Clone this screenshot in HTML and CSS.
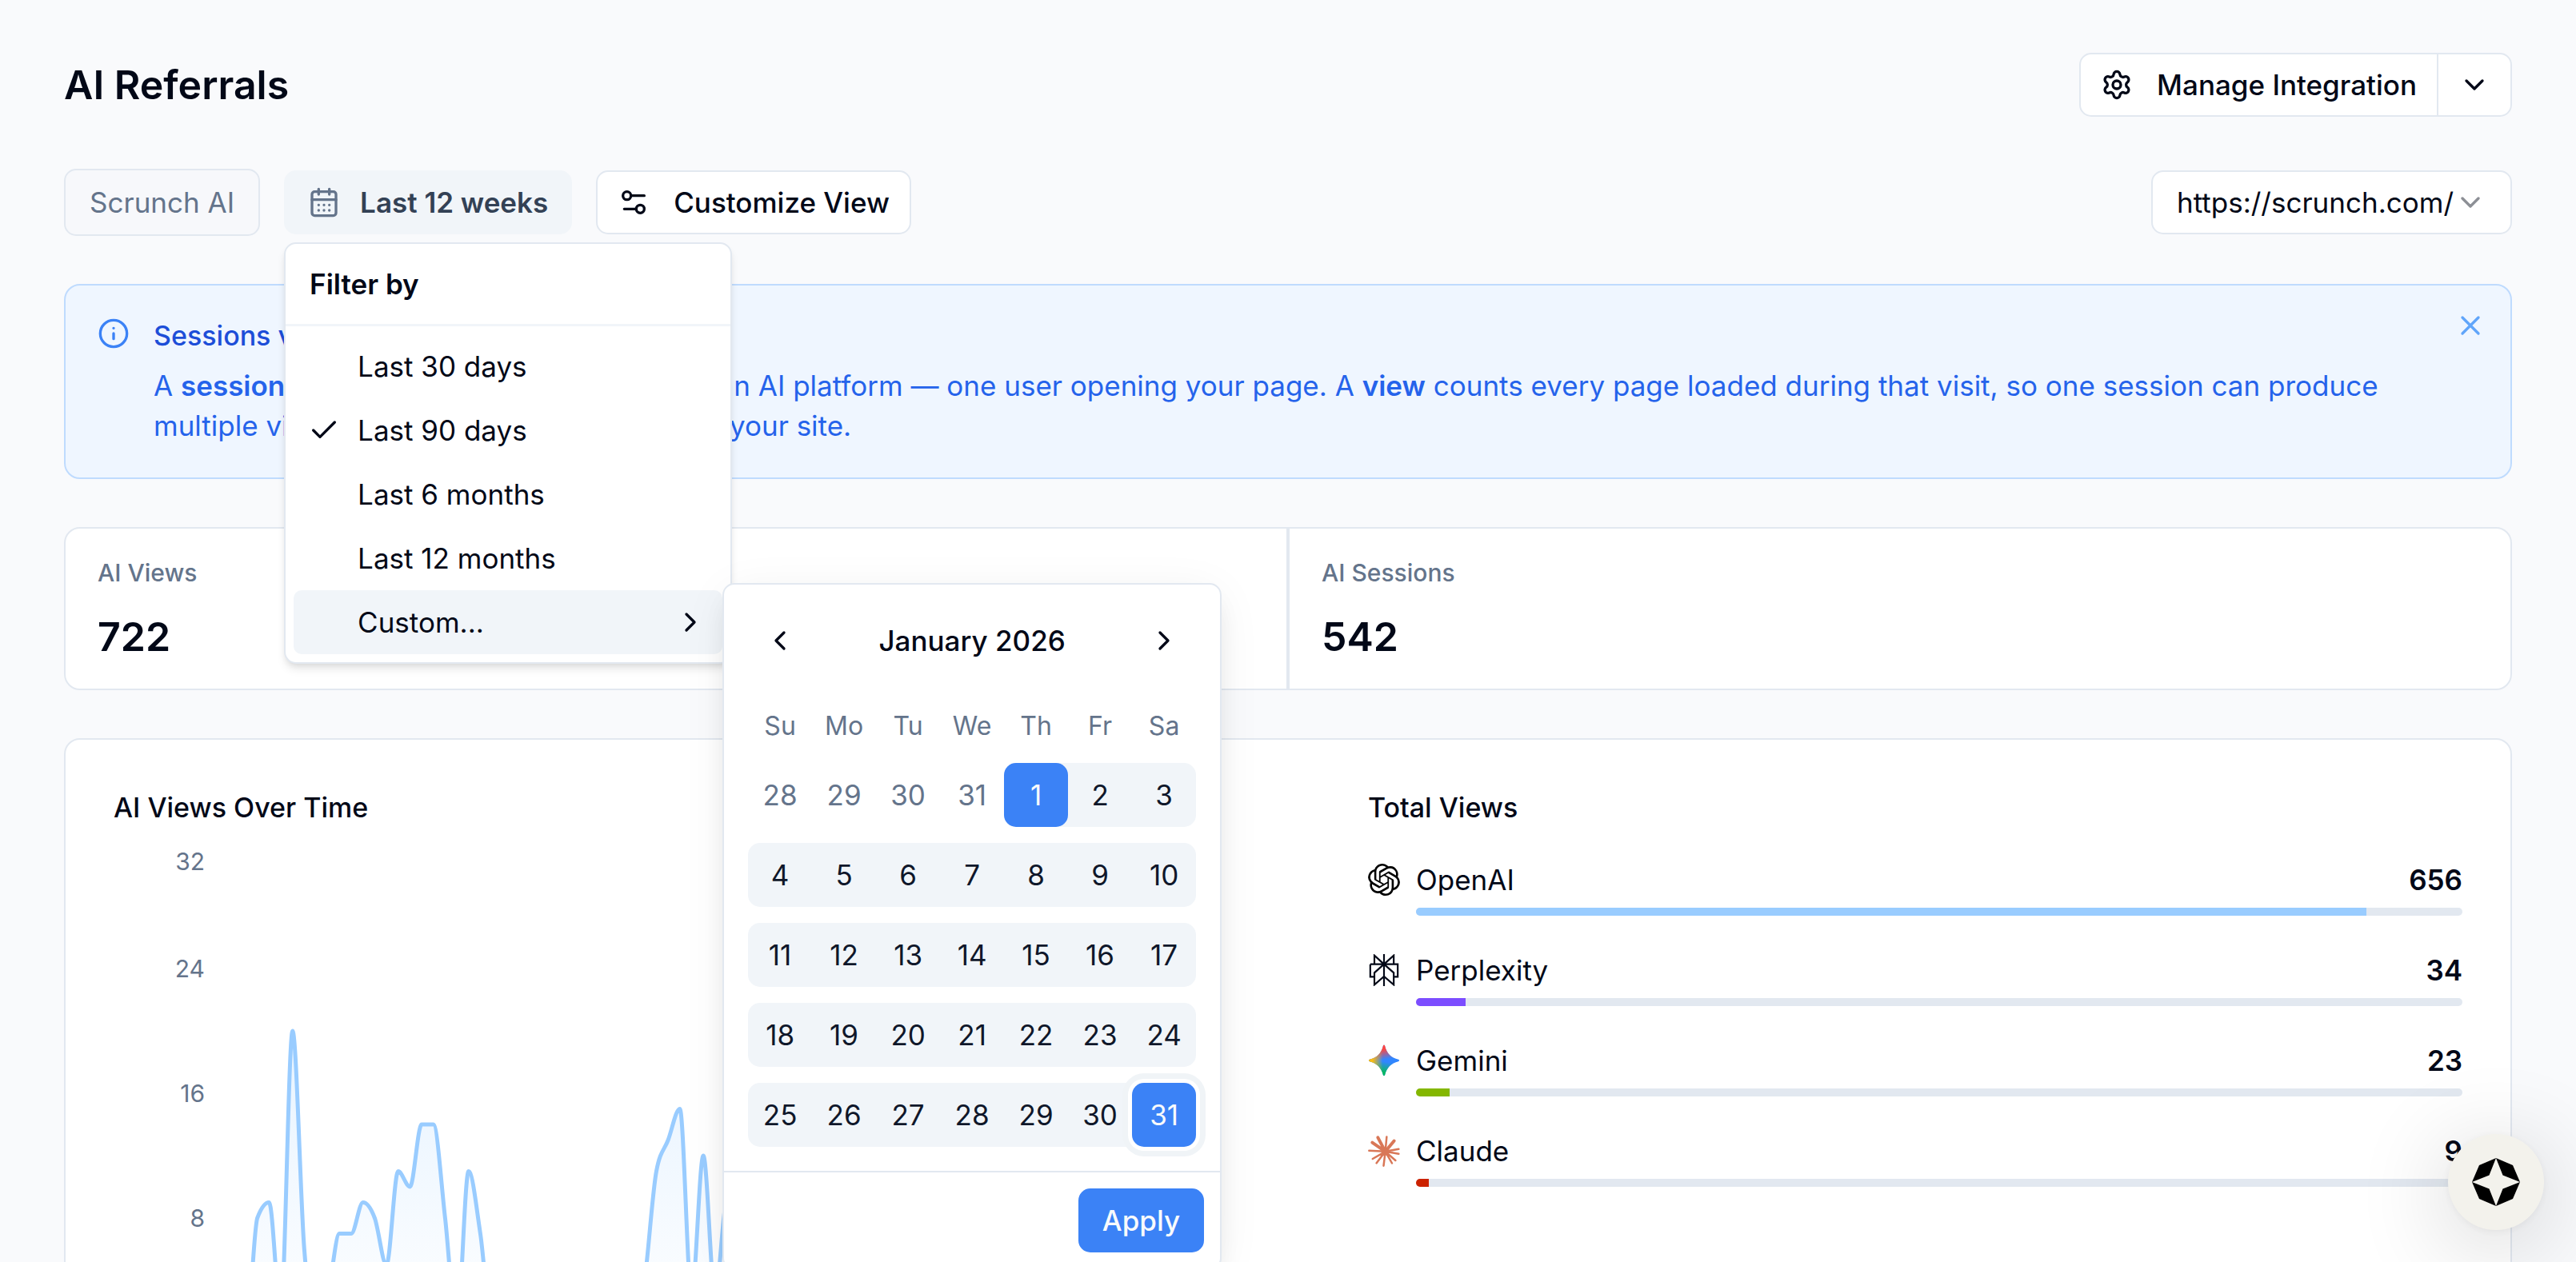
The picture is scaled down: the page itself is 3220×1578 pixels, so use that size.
FILE: index.html
```html
<!DOCTYPE html>
<html lang="en">
<head>
    <meta charset="UTF-8">
    <meta name="viewport" content="width=device-width, initial-scale=1.0">
    <title>AI Referrals</title>
    <link rel="stylesheet" href="styles.css">
</head>
<body>
    <main class="page">
        <header class="page-header">
            <h1>AI Referrals</h1>
            <div class="split-button">
                <button type="button" class="btn split-main">
                    <svg class="icon" viewBox="0 0 24 24"><path d="M9.671 4.136a2.34 2.34 0 0 1 4.659 0 2.34 2.34 0 0 0 3.319 1.915 2.34 2.34 0 0 1 2.33 4.033 2.34 2.34 0 0 0 0 3.831 2.34 2.34 0 0 1-2.33 4.033 2.34 2.34 0 0 0-3.319 1.915 2.34 2.34 0 0 1-4.659 0 2.34 2.34 0 0 0-3.32-1.915 2.34 2.34 0 0 1-2.33-4.033 2.34 2.34 0 0 0 0-3.831A2.34 2.34 0 0 1 6.35 6.051a2.34 2.34 0 0 0 3.319-1.915"/><circle cx="12" cy="12" r="3"/></svg>
                    Manage Integration
                </button>
                <button type="button" class="btn split-more" aria-label="More options">
                    <svg class="icon" viewBox="0 0 24 24"><path d="m6 9 6 6 6-6"/></svg>
                </button>
            </div>
        </header>

        <div class="toolbar">
            <button type="button" class="btn brand" disabled>Scrunch AI</button>
            <div class="filter">
                <button type="button" class="btn btn-filter" aria-expanded="true">
                    <svg class="icon" viewBox="0 0 24 24"><path d="M8 2v4M16 2v4M3 10h18M8 14h.01M12 14h.01M16 14h.01M8 18h.01M12 18h.01M16 18h.01"/><rect x="3" y="4" width="18" height="18" rx="2"/></svg>
                    Last 12 weeks
                </button>

                <div class="menu" role="menu">
                    <div class="menu-label">Filter by</div>
                    <hr class="menu-separator">
                    <button type="button" class="menu-item" role="menuitem">Last 30 days</button>
                    <button type="button" class="menu-item checked" role="menuitem">
                        <svg class="icon" viewBox="0 0 24 24"><path d="M20 6 9 17l-5-5"/></svg>
                        Last 90 days
                    </button>
                    <button type="button" class="menu-item" role="menuitem">Last 6 months</button>
                    <button type="button" class="menu-item" role="menuitem">Last 12 months</button>
                    <button type="button" class="menu-item active" role="menuitem">
                        Custom...
                        <svg class="icon" viewBox="0 0 24 24"><path d="m9 18 6-6-6-6"/></svg>
                    </button>
                </div>

                <div class="calendar">
                    <div class="calendar-body">
                        <div class="calendar-nav">
                            <button type="button" aria-label="Previous month"><svg class="icon" viewBox="0 0 24 24"><path d="m15 18-6-6 6-6"/></svg></button>
                            <span>January 2026</span>
                            <button type="button" aria-label="Next month"><svg class="icon" viewBox="0 0 24 24"><path d="m9 18 6-6-6-6"/></svg></button>
                        </div>
                        <table class="calendar-grid">
                            <thead>
                                <tr><th>Su</th><th>Mo</th><th>Tu</th><th>We</th><th>Th</th><th>Fr</th><th>Sa</th></tr>
                            </thead>
                            <tbody>
                                <tr>
                                    <td class="outside"><button type="button">28</button></td>
                                    <td class="outside"><button type="button">29</button></td>
                                    <td class="outside"><button type="button">30</button></td>
                                    <td class="outside"><button type="button">31</button></td>
                                    <td class="range-start"><button type="button">1</button></td>
                                    <td><button type="button">2</button></td>
                                    <td><button type="button">3</button></td>
                                </tr>
                                <tr>
                                    <td><button type="button">4</button></td>
                                    <td><button type="button">5</button></td>
                                    <td><button type="button">6</button></td>
                                    <td><button type="button">7</button></td>
                                    <td><button type="button">8</button></td>
                                    <td><button type="button">9</button></td>
                                    <td><button type="button">10</button></td>
                                </tr>
                                <tr>
                                    <td><button type="button">11</button></td>
                                    <td><button type="button">12</button></td>
                                    <td><button type="button">13</button></td>
                                    <td><button type="button">14</button></td>
                                    <td><button type="button">15</button></td>
                                    <td><button type="button">16</button></td>
                                    <td><button type="button">17</button></td>
                                </tr>
                                <tr>
                                    <td><button type="button">18</button></td>
                                    <td><button type="button">19</button></td>
                                    <td><button type="button">20</button></td>
                                    <td><button type="button">21</button></td>
                                    <td><button type="button">22</button></td>
                                    <td><button type="button">23</button></td>
                                    <td><button type="button">24</button></td>
                                </tr>
                                <tr>
                                    <td><button type="button">25</button></td>
                                    <td><button type="button">26</button></td>
                                    <td><button type="button">27</button></td>
                                    <td><button type="button">28</button></td>
                                    <td><button type="button">29</button></td>
                                    <td><button type="button">30</button></td>
                                    <td class="range-end"><button type="button">31</button></td>
                                </tr>
                            </tbody>
                        </table>
                    </div>
                    <div class="calendar-footer">
                        <button type="button" class="btn-apply">Apply</button>
                    </div>
                </div>
            </div>
            <button type="button" class="btn btn-customize">
                <svg class="icon" viewBox="0 0 24 24"><path d="M20 7h-9M14 17H5"/><circle cx="17" cy="17" r="3"/><circle cx="7" cy="7" r="3"/></svg>
                Customize View
            </button>
            <div class="site-select">
                <select aria-label="Site">
                    <option>https://scrunch.com/</option>
                </select>
                <svg class="icon" viewBox="0 0 24 24"><path d="m6 9 6 6 6-6"/></svg>
            </div>
        </div>

        <section class="notice">
            <svg class="icon" viewBox="0 0 24 24"><circle cx="12" cy="12" r="10"/><path d="M12 16v-4M12 8h.01"/></svg>
            <div>
                <h2>Sessions vs. views</h2>
                <p>A <strong>session</strong> is a single visit to your site from an AI platform — one user opening your page. A <strong>view</strong> counts every page loaded during that visit, so one session can produce multiple views as one visitor moves around your site.</p>
            </div>
            <button type="button" class="notice-close" aria-label="Dismiss">
                <svg class="icon" viewBox="0 0 24 24"><path d="M18 6 6 18M6 6l12 12"/></svg>
            </button>
        </section>

        <section class="stats">
            <div class="stat">
                <span class="stat-label">AI Views</span>
                <span class="stat-value">722</span>
            </div>
            <div class="stat">
                <span class="stat-label">AI Sessions</span>
                <span class="stat-value">542</span>
            </div>
        </section>

        <section class="charts">
            <div>
                <h3>AI Views Over Time</h3>
                <svg class="chart" id="viewsChart" role="img" aria-label="AI views over time"></svg>
            </div>
            <div>
                <h3>Total Views</h3>
                <ul class="platforms">
                    <li>
                        <svg class="logo" viewBox="0 0 24 24"><path d="M22.2819 9.8211a5.9847 5.9847 0 0 0-.5157-4.9108 6.0462 6.0462 0 0 0-6.5098-2.9A6.0651 6.0651 0 0 0 4.9807 4.1818a5.9847 5.9847 0 0 0-3.9977 2.9 6.0462 6.0462 0 0 0 .7427 7.0966 5.98 5.98 0 0 0 .511 4.9107 6.051 6.051 0 0 0 6.5146 2.9001A5.9847 5.9847 0 0 0 13.2599 24a6.0557 6.0557 0 0 0 5.7718-4.2058 5.9894 5.9894 0 0 0 3.9977-2.9001 6.0557 6.0557 0 0 0-.7475-7.0729zm-9.022 12.6081a4.4755 4.4755 0 0 1-2.8764-1.0408l.1419-.0804 4.7783-2.7582a.7948.7948 0 0 0 .3927-.6813v-6.7369l2.02 1.1686a.071.071 0 0 1 .038.052v5.5826a4.504 4.504 0 0 1-4.4945 4.4944zm-9.6607-4.1254a4.4708 4.4708 0 0 1-.5346-3.0137l.142.0852 4.783 2.7582a.7712.7712 0 0 0 .7806 0l5.8428-3.3685v2.3324a.0804.0804 0 0 1-.0332.0615L9.74 19.9502a4.4992 4.4992 0 0 1-6.1408-1.6464zM2.3408 7.8956a4.485 4.485 0 0 1 2.3655-1.9728V11.6a.7664.7664 0 0 0 .3879.6765l5.8144 3.3543-2.0201 1.1685a.0757.0757 0 0 1-.071 0l-4.8303-2.7865A4.504 4.504 0 0 1 2.3408 7.872zm16.5963 3.8558L13.1038 8.364 15.1192 7.2a.0757.0757 0 0 1 .071 0l4.8303 2.7913a4.4944 4.4944 0 0 1-.6765 8.1042v-5.6772a.79.79 0 0 0-.407-.667zm2.0107-3.0231l-.142-.0852-4.7735-2.7818a.7759.7759 0 0 0-.7854 0L9.409 9.2297V6.8974a.0662.0662 0 0 1 .0284-.0615l4.8303-2.7866a4.4992 4.4992 0 0 1 6.6802 4.66zM8.3065 12.863l-2.02-1.1638a.0804.0804 0 0 1-.038-.0567V6.0742a4.4992 4.4992 0 0 1 7.3757-3.4537l-.142.0805L8.704 5.459a.7948.7948 0 0 0-.3927.6813zm1.0976-2.3654l2.602-1.4998 2.6069 1.4998v2.9994l-2.5974 1.4997-2.6067-1.4997Z"/></svg>
                        <div class="platform-info">
                            <div class="platform-row"><span>OpenAI</span><strong>656</strong></div>
                            <div class="bar"><div class="bar-fill openai" style="width: 90.86%"></div></div>
                        </div>
                    </li>
                    <li>
                        <svg class="logo perplexity-logo" viewBox="0 0 24 24"><path d="M12 0v24M4.8 7.6V1L12 7.6 19.300 1v6.600M1.700 7.600h20.600v9.400h-3M1.700 7.600V17h3.100M12 7.600 4.800 14v9L12 16.800l7.300 6.200v-9L12 7.600"/></svg>
                        <div class="platform-info">
                            <div class="platform-row"><span>Perplexity</span><strong>34</strong></div>
                            <div class="bar"><div class="bar-fill perplexity" style="width: 4.71%"></div></div>
                        </div>
                    </li>
                    <li>
                        <svg class="logo" viewBox="0 0 24 24">
                            <defs>
                                <linearGradient id="gemRed" x1="12" y1="0" x2="14" y2="11" gradientUnits="userSpaceOnUse"><stop offset=".3" stop-color="#ff4641"/><stop offset="1" stop-color="#ff4641" stop-opacity="0"/></linearGradient>
                                <linearGradient id="gemGreen" x1="11" y1="24" x2="13" y2="13" gradientUnits="userSpaceOnUse"><stop offset=".3" stop-color="#08b962"/><stop offset="1" stop-color="#08b962" stop-opacity="0"/></linearGradient>
                                <linearGradient id="gemYellow" x1="0" y1="12" x2="11" y2="12" gradientUnits="userSpaceOnUse"><stop offset=".3" stop-color="#fabc12"/><stop offset="1" stop-color="#fabc12" stop-opacity="0"/></linearGradient>
                                <path id="gemStar" d="M12 .5c.4 0 .6.300.700.700 1.300 5.400 4.700 8.800 10.100 10.100.900.200.900 1.200 0 1.400-5.400 1.300-8.800 4.700-10.100 10.100-.200.900-1.200.900-1.400 0-1.300-5.400-4.700-8.800-10.100-10.100-.900-.200-.900-1.200 0-1.400 5.400-1.300 8.800-4.700 10.100-10.100.100-.400.300-.700.700-.700z"/>
                            </defs>
                            <use href="#gemStar" fill="#3186ff"/>
                            <use href="#gemStar" fill="url(#gemRed)"/>
                            <use href="#gemStar" fill="url(#gemGreen)"/>
                            <use href="#gemStar" fill="url(#gemYellow)"/>
                        </svg>
                        <div class="platform-info">
                            <div class="platform-row"><span>Gemini</span><strong>23</strong></div>
                            <div class="bar"><div class="bar-fill gemini" style="width: 3.19%"></div></div>
                        </div>
                    </li>
                    <li>
                        <svg class="logo claude-logo" viewBox="0 0 24 24">
                            <circle cx="13" cy="12.500" r="2.500"/>
                            <path class="ray-wide" d="M13 12.500 7.400 2M13 12.500l6.600-8M13 12.500 3.200 5.800"/>
                            <path class="ray" d="M13 12.500l1-11M13 12.500l10-1.800M13 12.500l10 1.800M13 12.500l7.600 6.700M13 12.500l5 8.800M13 12.500l-1.300 10.700M13 12.500l-6.600 8.700M13 12.500 3.500 18M13 12.500 .800 11.900"/>
                        </svg>
                        <div class="platform-info">
                            <div class="platform-row"><span>Claude</span><strong>9</strong></div>
                            <div class="bar"><div class="bar-fill claude" style="width: 1.25%"></div></div>
                        </div>
                    </li>
                </ul>
            </div>
        </section>
    </main>

    <button type="button" class="chat-bubble" aria-label="Open chat">
        <svg viewBox="0 0 60 60"><path d="M30 0 9 9 0 30l21.500-8.500zM30 0l21 9 9 21-21.500-8.500zM30 60 9 51 0 30l21.500 8.500zM30 60l21-9 9-21-21.500 8.500z"/></svg>
    </button>

    <script src="script.js"></script>
</body>
</html>
```
FILE: styles.css
```css
* {
    margin: 0;
    padding: 0;
    box-sizing: border-box;
}

body {
    height: 100vh;
    overflow: hidden;
    font-family: Inter, "Liberation Sans", sans-serif;
    font-size: 35px;
    line-height: 50px;
    color: #020817;
    background-color: #f9fafc;
}

button,
select {
    font: inherit;
    color: inherit;
    background: none;
    border: none;
}

.icon {
    width: 40px;
    height: 40px;
    flex: none;
    fill: none;
    stroke: currentColor;
    stroke-width: 2;
    stroke-linecap: round;
    stroke-linejoin: round;
}

.page {
    padding: 66px 80px 0;
}

/* Header */
.page-header {
    display: flex;
    justify-content: space-between;
    align-items: center;
}

h1 {
    font-size: 50px;
    font-weight: 600;
}

.btn {
    display: flex;
    align-items: center;
    gap: 30px;
    height: 80px;
    padding: 0 25px;
    font-weight: 500;
    white-space: nowrap;
    background-color: #fff;
    border: 2px solid #e2e8f0;
    border-radius: 15px;
}

.split-button {
    display: flex;
}

.split-main {
    border-radius: 15px 0 0 15px;
}

.split-more {
    border-left: none;
    border-radius: 0 15px 15px 0;
}

/* Toolbar */
.toolbar {
    display: flex;
    align-items: center;
    gap: 30px;
    margin-top: 65px;
}

.brand {
    height: 84px;
    padding: 0 30px;
    font-weight: 400;
    color: #64748b;
    background-color: #f7f8fb;
}

.filter {
    position: relative;
}

.btn-filter {
    gap: 25px;
    padding: 0 28px;
    color: #334155;
    font-weight: 600;
    background-color: #f1f5f9;
    border-color: #f1f5f9;
}

.btn-filter .icon {
    color: #64748b;
}

.site-select {
    position: relative;
    margin-left: auto;
}

.site-select select {
    width: 451px;
    height: 80px;
    padding: 0 30px;
    appearance: none;
    background-color: #fff;
    border: 2px solid #e2e8f0;
    border-radius: 15px;
}

.site-select .icon {
    position: absolute;
    top: 20px;
    right: 32px;
    opacity: 0.45;
    pointer-events: none;
}

/* Filter menu */
.menu {
    position: absolute;
    top: 90px;
    left: 0;
    z-index: 10;
    width: 560px;
    padding: 10px;
    background-color: #fff;
    border: 2px solid #e2e8f0;
    border-radius: 15px;
    box-shadow: 0 8px 12px -2px rgba(0, 0, 0, 0.1), 0 4px 8px -4px rgba(0, 0, 0, 0.1);
}

.menu-label {
    padding: 15px 20px;
    font-weight: 600;
}

.menu-separator {
    height: 3px;
    margin: 10px -10px;
    background-color: #f1f5f9;
    border: none;
}

.menu-item {
    display: flex;
    align-items: center;
    justify-content: space-between;
    width: 100%;
    height: 80px;
    padding: 0 20px 0 80px;
    text-align: left;
    border-radius: 10px;
}

.menu-item.checked {
    justify-content: flex-start;
    gap: 22px;
    padding-left: 18px;
}

.menu-item.active {
    background-color: #f1f5f9;
}

/* Calendar */
.calendar {
    position: absolute;
    top: 516px;
    left: 548px;
    z-index: 11;
    width: 624px;
    background-color: #fff;
    border: 2px solid #e2e8f0;
    border-radius: 15px;
    box-shadow: 0 20px 30px -6px rgba(0, 0, 0, 0.08), 0 8px 60px -8px rgba(0, 0, 0, 0.08);
}

.calendar-body {
    padding: 30px;
}

.calendar-nav {
    display: flex;
    justify-content: space-between;
    align-items: center;
    height: 80px;
    margin-bottom: 40px;
    font-weight: 500;
}

.calendar-nav button {
    display: flex;
    padding: 20px;
}

.calendar-grid {
    width: 100%;
    border-collapse: collapse;
    table-layout: fixed;
}

.calendar-grid th {
    font-size: 32px;
    font-weight: 400;
    line-height: 53px;
    color: #64748b;
}

.calendar-grid td {
    height: 100px;
    padding-top: 20px;
}

.calendar-grid td button {
    display: block;
    width: 100%;
    height: 80px;
    color: #0f172a;
    background-color: #f1f5f9;
}

.calendar-grid td:first-child button {
    border-radius: 15px 0 0 15px;
}

.calendar-grid td:last-child button {
    border-radius: 0 15px 15px 0;
}

.calendar-grid .outside button {
    color: #64748b;
    background: none;
}

.calendar-grid .range-start {
    background: linear-gradient(to right, transparent 50%, #f1f5f9 50%) 0 20px no-repeat;
}

.calendar-grid td.range-start button,
.calendar-grid td.range-end button {
    position: relative;
    color: #f8fafc;
    background-color: #3b82f6;
    border-radius: 15px;
}

.calendar-grid td.range-end:last-child button {
    border-radius: 15px;
    box-shadow: 0 0 0 5px #fff, 0 0 0 12px #f0f4f7;
}

.calendar-footer {
    display: flex;
    justify-content: flex-end;
    padding: 20px;
    border-top: 2px solid #e2e8f0;
}

.btn-apply {
    height: 80px;
    padding: 0 30px;
    font-weight: 500;
    color: #f8fafc;
    background-color: #3b82f6;
    border-radius: 15px;
}

/* Notice */
.notice {
    position: relative;
    display: flex;
    gap: 30px;
    margin-top: 60px;
    padding: 40px 120px 40px 40px;
    color: #2563eb;
    background-color: #eff6ff;
    border: 2px solid #bfdbfe;
    border-radius: 20px;
}

.notice > .icon {
    color: #3b82f6;
}

.notice h2 {
    margin-bottom: 15px;
    font-size: 34px;
    font-weight: 500;
    line-height: 45px;
    color: #1d4ed8;
}

.notice strong {
    font-weight: 600;
}

.notice-close {
    position: absolute;
    top: 30px;
    right: 30px;
    display: flex;
    color: #60a5fa;
}

/* Stats */
.stats {
    display: grid;
    grid-template-columns: 1fr 1fr;
    margin-top: 60px;
    background-color: #fff;
    border: 2px solid #e2e8f0;
    border-radius: 20px;
}

.stat {
    display: flex;
    flex-direction: column;
    gap: 20px;
    padding: 30px 40px;
}

.stat:first-child {
    border-right: 2px solid #e2e8f0;
}

.stat:last-child {
    border-left: 2px solid #e2e8f0;
}

.stat-label {
    font-size: 30px;
    font-weight: 500;
    color: #64748b;
}

.stat-value {
    font-size: 50px;
    font-weight: 600;
    line-height: 70px;
}

/* Charts */
.charts {
    display: grid;
    grid-template-columns: 1fr 1fr;
    gap: 200px;
    margin-top: 60px;
    padding: 60px;
    background-color: #fff;
    border: 2px solid #e2e8f0;
    border-radius: 20px;
}

h3 {
    font-size: 34px;
    font-weight: 500;
}

.chart {
    display: block;
    width: 100%;
    height: 720px;
    overflow: visible;
}

.chart text {
    font-size: 30px;
    text-anchor: end;
    fill: #64748b;
}

.chart-line {
    fill: none;
    stroke: #99ccff;
    stroke-width: 5;
}

.platforms {
    display: flex;
    flex-direction: column;
    gap: 43px;
    margin-top: 40px;
    list-style: none;
}

.platforms li {
    display: flex;
    gap: 20px;
}

.logo {
    width: 40px;
    height: 40px;
    margin-top: 5px;
    flex: none;
}

.perplexity-logo path {
    fill: none;
    stroke: #020817;
    stroke-width: 1.3;
}

.claude-logo {
    fill: #d97757;
    stroke: #d97757;
    stroke-linecap: round;
}

.claude-logo .ray {
    stroke-width: 1.5;
}

.claude-logo .ray-wide {
    stroke-width: 2.4;
}

.platform-info {
    flex: 1;
}

.platform-row {
    display: flex;
    justify-content: space-between;
}

.platform-row strong {
    font-weight: 600;
}

.bar {
    height: 10px;
    margin-top: 10px;
    overflow: hidden;
    background-color: #e2e8f0;
    border-radius: 5px;
}

.bar-fill {
    height: 100%;
}

.openai {
    background-color: #99ccff;
}

.perplexity {
    background-color: #7c4dff;
}

.gemini {
    background-color: #84b700;
}

.claude {
    background-color: #cc2200;
}

/* Chat bubble */
.chat-bubble {
    position: fixed;
    right: 40px;
    bottom: 40px;
    z-index: 20;
    display: flex;
    align-items: center;
    justify-content: center;
    width: 120px;
    height: 120px;
    background-color: #f3f2ec;
    border-radius: 50%;
    box-shadow: 0 2px 12px rgba(0, 0, 0, 0.06), 0 18px 120px rgba(0, 0, 0, 0.2);
}

.chat-bubble svg {
    width: 60px;
    height: 60px;
}
```
FILE: script.js
```js
const views = [
    0, 8, 9, 2, 20, 6, 1, 3, 7, 7, 9, 8, 5, 11, 10, 14, 14, 8, 1, 11, 7,
    1, 2, 3, 1, 0, 2, 4, 3, 1, 2, 0, 1, 0, 4, 11, 13, 15, 3, 12, 3, 9,
    6, 10, 4, 7, 12, 9, 5, 3, 8, 11, 6, 4, 9, 13, 10, 7, 2, 5, 8, 12, 6,
    3, 9, 14, 11, 8, 4, 6, 10, 7, 3, 5, 9, 12, 8, 4, 6, 3, 2, 4, 3
];
const ticks = [32, 24, 16, 8];

// plot starts right of the tick labels, one view is `unit` pixels high
const left = 165;
const unit = 19.5;
const plotTop = 20;
const maxValue = 32;

function y(v) {
    return plotTop + (maxValue - v) * unit;
}

// monotone cubic interpolation
function linePath(values, step) {
    const d = values.slice(1).map((v, i) => v - values[i]);
    const m = values.map((v, i) => {
        if (i === 0 || i === values.length - 1) return 0;
        const a = d[i - 1];
        const b = d[i];
        if (a * b <= 0) return 0;
        return Math.sign(a) * Math.min(Math.abs(a), Math.abs(b), Math.abs(a + b) / 4) * 2;
    });
    let path = `M${left},${y(values[0])}`;
    for (let i = 1; i < values.length; i++) {
        const x0 = left + (i - 1) * step;
        const x1 = x0 + step;
        path += `C${x0 + step / 3},${y(values[i - 1] + m[i - 1] / 3)} ${x1 - step / 3},${y(values[i] - m[i] / 3)} ${x1},${y(values[i])}`;
    }
    return path;
}

function drawChart() {
    const svg = document.getElementById('viewsChart');
    const width = svg.clientWidth;
    const line = linePath(views, (width - left) / (views.length - 1));
    const labels = ticks.map(t => `<text x="114" y="${Math.max(y(t), 42) + 11}">${t}</text>`).join('');

    svg.innerHTML = `
        <defs>
            <linearGradient id="areaFill" x1="0" y1="0" x2="0" y2="1">
                <stop offset="0" stop-color="#99ccff" stop-opacity="0.24"/>
                <stop offset="1" stop-color="#99ccff" stop-opacity="0"/>
            </linearGradient>
        </defs>
        ${labels}
        <path d="${line}V${y(0)}H${left}Z" fill="url(#areaFill)"/>
        <path class="chart-line" d="${line}"/>`;
}

drawChart();
window.addEventListener('resize', drawChart);
```
